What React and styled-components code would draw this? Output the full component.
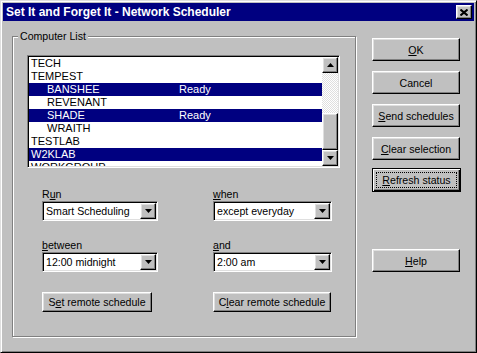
import styled, { createGlobalStyle } from 'styled-components';

const GlobalStyle = createGlobalStyle`
  body {
    margin: 0;
    background: #c0c0c0;
    font-family: "Liberation Sans", Arial, sans-serif;
    font-size: 10.6px;
  }
`;

const computers = [
  { name: 'TECH', indent: false },
  { name: 'TEMPEST', indent: false },
  { name: 'BANSHEE', indent: true, status: 'Ready', selected: true },
  { name: 'REVENANT', indent: true },
  { name: 'SHADE', indent: true, status: 'Ready', selected: true },
  { name: 'WRAITH', indent: true },
  { name: 'TESTLAB', indent: false },
  { name: 'W2KLAB', indent: false, selected: true },
  { name: 'WORKGROUP', indent: false },
];

const Window = styled.div`
  width: 477px;
  height: 353px;
  box-sizing: border-box;
  padding: 2px;
  background: #c0c0c0;
  border: 1px solid;
  border-color: #dfdfdf #000 #000 #dfdfdf;
  box-shadow: inset 1px 1px #fff, inset -1px -1px #808080;
  display: flex;
  flex-direction: column;
`;

const TitleBar = styled.div`
  height: 18px;
  display: flex;
  align-items: center;
  justify-content: space-between;
  padding: 0 2px 0 3px;
  background: #000080;
  color: #fff;
  font-size: 12px;
  font-weight: bold;
`;

const Bevel = `
  background: #c0c0c0;
  box-sizing: border-box;
  border: 1px solid;
  border-color: #fff #000 #000 #fff;
  box-shadow: inset -1px -1px #808080, inset 1px 1px #dfdfdf;
`;

const CloseButton = styled.div`
  ${Bevel}
  width: 16px;
  height: 14px;
  display: flex;
  align-items: center;
  justify-content: center;
`;

const Body = styled.div`
  display: flex;
  padding-left: 9px;
`;

const GroupBox = styled.fieldset`
  width: 344px;
  height: 307px;
  box-sizing: border-box;
  margin: 9px 0 0 0;
  padding: 0;
  min-width: 0;
  border: 1px solid #808080;
  box-shadow: 1px 1px 0 #fff, inset 1px 1px 0 #fff;
`;

const Legend = styled.legend`
  margin-left: 5px;
  padding: 0 2px;
  line-height: 13px;
  background: #c0c0c0;
`;

const GroupContent = styled.div`
  padding: 12px 0 0 14px;
`;

const ListBox = styled.div`
  width: 313px;
  height: 113px;
  box-sizing: border-box;
  background: #fff;
  border: 1px solid;
  border-color: #808080 #fff #fff #808080;
  box-shadow: inset 1px 1px #000, inset -1px -1px #dfdfdf;
  padding: 1px;
  display: flex;
`;

const Rows = styled.div`
  flex: 1;
  overflow: hidden;
`;

const Row = styled.div`
  display: flex;
  height: 13px;
  line-height: 13px;
  font-size: 11px;
  background: ${({ $selected }) => ($selected ? '#000080' : 'transparent')};
  color: ${({ $selected }) => ($selected ? '#fff' : '#000')};
`;

const Name = styled.span`
  width: ${({ $indent }) => ($indent ? 132 : 148)}px;
  padding-left: ${({ $indent }) => ($indent ? 18 : 2)}px;
`;

const ScrollBar = styled.div`
  width: 16px;
  display: flex;
  flex-direction: column;
`;

const ScrollButton = styled.div`
  ${Bevel}
  width: 16px;
  height: 16px;
  flex-shrink: 0;
  display: flex;
  align-items: center;
  justify-content: center;
`;

const Track = styled.div`
  flex: 1;
  display: flex;
  flex-direction: column;
  background-color: #c0c0c0;
  background-image: repeating-conic-gradient(#dfdfdf 0 25%, #fff 0 50%);
  background-size: 2px 2px;
`;

const Thumb = styled.div`
  ${Bevel}
  margin-top: auto;
  height: 37px;
`;

const Controls = styled.div`
  margin: 20px 0 0 15px;
  display: grid;
  grid-template-columns: 116px 119px;
  column-gap: 55px;
  row-gap: 18px;
`;

const Field = styled.div`
  display: flex;
  flex-direction: column;
`;

const Label = styled.span`
  line-height: 13px;
`;

const Combo = styled.div`
  height: 20px;
  box-sizing: border-box;
  background: #fff;
  border: 1px solid;
  border-color: #808080 #fff #fff #808080;
  box-shadow: inset 1px 1px #000, inset -1px -1px #dfdfdf;
  padding: 1px;
  display: flex;
  align-items: center;
`;

const ComboText = styled.span`
  flex: 1;
  padding-left: 2px;
  white-space: nowrap;
`;

const Button = styled.div`
  ${Bevel}
  width: ${({ $width }) => $width}px;
  height: ${({ $height }) => $height || 20}px;
  margin-top: ${({ $top }) => $top || 0}px;
  display: flex;
  align-items: center;
  justify-content: center;
  padding: ${({ $default }) => ($default ? 3 : 0)}px;
  white-space: nowrap;
  color: #000;
  ${({ $default }) =>
    $default &&
    `
    border-color: #000;
    box-shadow: inset 1px 1px #fff, inset -1px -1px #000, inset -2px -2px #808080;
  `}
`;

const FocusRing = styled.span`
  flex: 1;
  align-self: stretch;
  display: flex;
  align-items: center;
  justify-content: center;
  border: 1px dotted #000;
`;

const ButtonRow = styled.div`
  margin-top: 2px;
`;

const SideColumn = styled.div`
  display: flex;
  flex-direction: column;
  gap: 10px;
  margin: 17px 0 0 16px;
`;

const Arrow = ({ up }) => (
  <svg width="7" height="4" viewBox="0 0 7 4">
    <polygon
      points={up ? '3.5,0 7,4 0,4' : '0,0 7,0 3.5,4'}
      fill="#000"
    />
  </svg>
);

const Dropdown = ({ label, value }) => (
  <Field>
    <Label>{label}</Label>
    <Combo>
      <ComboText>{value}</ComboText>
      <ScrollButton>
        <Arrow />
      </ScrollButton>
    </Combo>
  </Field>
);

export default function App() {
  return (
    <>
      <GlobalStyle />
      <Window>
        <TitleBar>
          <span>Set It and Forget It - Network Scheduler</span>
          <CloseButton>
            <svg width="8" height="7" viewBox="0 0 8 7">
              <path d="M0.5 0.5 L7.5 6.5 M7.5 0.5 L0.5 6.5" stroke="#000" strokeWidth="2" />
            </svg>
          </CloseButton>
        </TitleBar>
        <Body>
          <GroupBox>
            <Legend>Computer List</Legend>
            <GroupContent>
              <ListBox>
                <Rows>
                  {computers.map((c) => (
                    <Row key={c.name} $selected={c.selected}>
                      <Name $indent={c.indent}>{c.name}</Name>
                      <span>{c.status}</span>
                    </Row>
                  ))}
                </Rows>
                <ScrollBar>
                  <ScrollButton>
                    <Arrow up />
                  </ScrollButton>
                  <Track>
                    <Thumb />
                  </Track>
                  <ScrollButton>
                    <Arrow />
                  </ScrollButton>
                </ScrollBar>
              </ListBox>
              <Controls>
                <Dropdown label={<>R<u>u</u>n</>} value="Smart Scheduling" />
                <Dropdown label={<><u>w</u>hen</>} value="except everyday" />
                <Dropdown label={<><u>b</u>etween</>} value="12:00 midnight" />
                <Dropdown label={<><u>a</u>nd</>} value="2:00 am" />
                <ButtonRow>
                  <Button $width={110}>S<u>e</u>t remote schedule</Button>
                </ButtonRow>
                <ButtonRow>
                  <Button $width={118}>C<u>l</u>ear remote schedule</Button>
                </ButtonRow>
              </Controls>
            </GroupContent>
          </GroupBox>
          <SideColumn>
            <Button $width={88} $height={23}><u>O</u>K</Button>
            <Button $width={88} $height={23}>Cancel</Button>
            <Button $width={88} $height={23}><u>S</u>end schedules</Button>
            <Button $width={88} $height={23}><u>C</u>lear selection</Button>
            <Button $width={89} $height={24} $top={-2} $default>
              <FocusRing><u>R</u>efresh status</FocusRing>
            </Button>
            <Button $width={88} $height={23} $top={47}><u>H</u>elp</Button>
          </SideColumn>
        </Body>
      </Window>
    </>
  );
}
